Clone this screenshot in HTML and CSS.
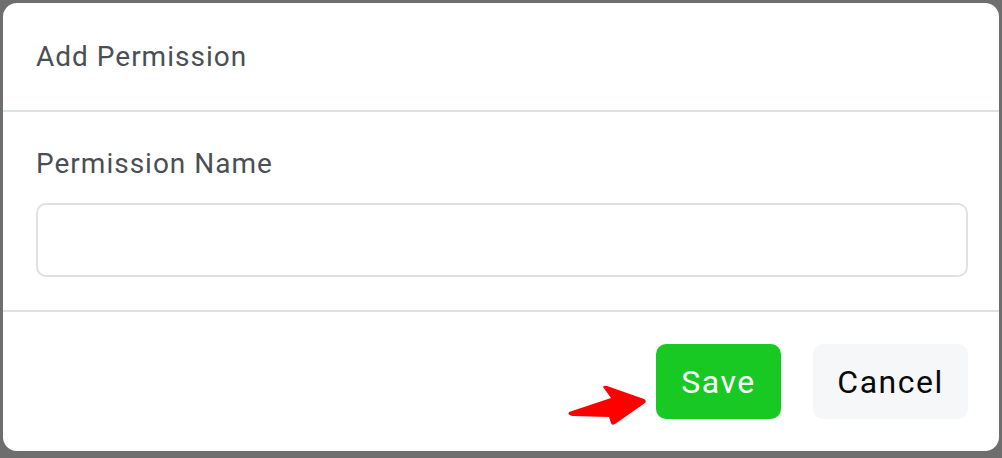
FILE: index.html
```html
<!DOCTYPE html>
<html>
<head>
  <title>Add Permission</title>
  <link rel="stylesheet" href="styles.css">
</head>
<body>
  <div class="modal">
    <div class="modal-header">
      <h5 class="modal-title">Add Permission</h5>
    </div>
    <div class="modal-body">
      <label class="form-label" for="permission-name">Permission Name</label>
      <input type="text" class="form-control" id="permission-name">
    </div>
    <div class="modal-footer">
      <button class="btn btn-save">Save</button>
      <button class="btn btn-cancel">Cancel</button>
      <svg class="pointer" width="90" height="50" viewBox="560 380 90 50">
        <path d="M569 412 L611 398 L603 387 Q604 385 607 386 L644 399 Q647 401 645 403 L615 424 Q612 426 611 423 L609 417 L573 416 Q567 415 569 412 Z" fill="#ff0000"/>
      </svg>
    </div>
  </div>
</body>
</html>
```

FILE: styles.css
```css
body {
  margin: 0;
  padding: 3px 3px 7px 3px;
  background-color: #6e6e6e;
  font-family: Roboto, 'Liberation Sans', sans-serif;
}
.modal {
  position: relative;
  height: 448px;
  background-color: #ffffff;
  border-radius: 14px;
  display: flex;
  flex-direction: column;
}
.modal-header {
  height: 107px;
  padding: 0 33px;
  display: flex;
  align-items: center;
  border-bottom: 2px solid #dee2e6;
}
.modal-title {
  margin: 0;
  font-size: 28px;
  font-weight: 400;
  letter-spacing: 1px;
  color: #4a4f56;
}
.modal-body {
  padding: 35px 31px 33px 33px;
  border-bottom: 2px solid #dee2e6;
}
.form-label {
  display: block;
  font-size: 28px;
  line-height: 34px;
  letter-spacing: 1px;
  color: #4a4f56;
  margin-bottom: 22px;
}
.form-control {
  display: block;
  box-sizing: border-box;
  width: 100%;
  height: 74px;
  border: 2px solid #dee2e6;
  border-radius: 10px;
  background: #ffffff;
  font-family: Roboto, 'Liberation Sans', sans-serif;
  font-size: 28px;
  padding: 0 16px;
}
.modal-footer {
  flex: 1;
  display: flex;
  align-items: center;
  justify-content: flex-end;
  gap: 32px;
  padding: 0 31px 0 33px;
}
.btn {
  height: 75px;
  border: none;
  border-radius: 10px;
  font-family: Roboto, 'Liberation Sans', sans-serif;
  font-size: 32px;
  letter-spacing: 1.5px;
}
.btn-save {
  width: 125px;
  background-color: #18c924;
  color: #ffffff;
}
.btn-cancel {
  width: 155px;
  background-color: #f6f7f9;
  color: #0a0a0a;
}
.pointer {
  position: absolute;
  left: 557px;
  top: 377px;
}
```
